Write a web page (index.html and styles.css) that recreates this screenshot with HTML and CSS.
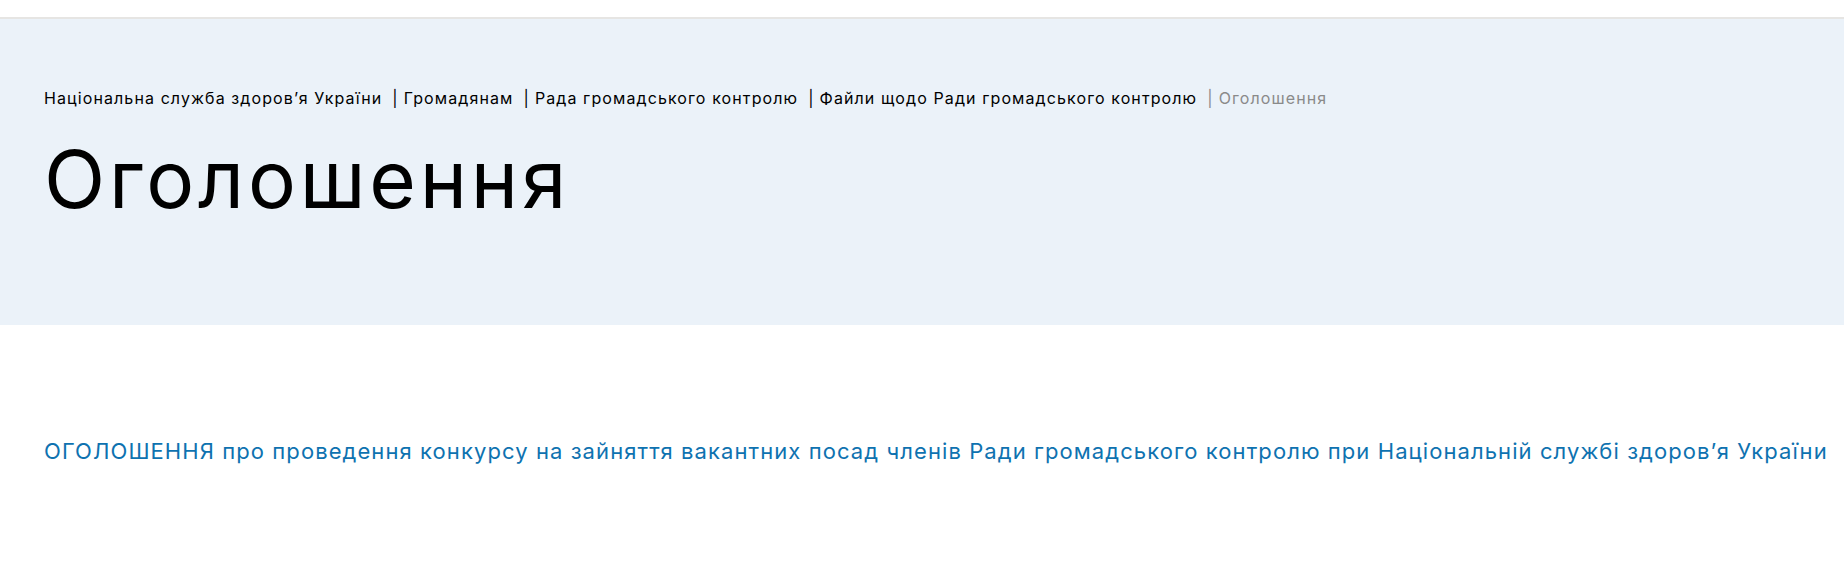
FILE: index.html
```html
<!DOCTYPE html>
<html lang="uk">
<head>
<meta charset="utf-8">
<title>Оголошення</title>
<link rel="stylesheet" href="styles.css">
</head>
<body>
<div class="topbar"></div>
<section class="hero">
  <nav class="crumbs"><a href="#">Національна служба здоров’я України</a><span class="sep">|</span><a href="#">Громадянам</a><span class="sep">|</span><a href="#">Рада громадського контролю</a><span class="sep">|</span><a href="#">Файли щодо Ради громадського контролю</a><span class="current"><span class="sep">|</span>Оголошення</span></nav>
  <h1 class="title">Оголошення</h1>
</section>
<main class="content">
  <a class="doc-link" href="#">ОГОЛОШЕННЯ про проведення конкурсу на зайняття вакантних посад членів Ради громадського контролю при Національній службі здоров’я України</a>
</main>
</body>
</html>
```
FILE: styles.css
```css
* { box-sizing: border-box; }
html, body { margin: 0; padding: 0; background: #fff; }
body { font-family: Inter, "Noto Sans", sans-serif; color: #000; }
.topbar { height: 19px; border-bottom: 2px solid #e6e5e3; }
.hero { background: #ebf2f9; height: 306px; padding: 69px 44px 0; }
.crumbs { font-size: 16px; line-height: 20px; letter-spacing: 1.1px; white-space: nowrap; }
.crumbs a { color: #000; text-decoration: none; }
.crumbs .sep { margin: 0 5px 0 10px; }
.crumbs .current { color: #8a8a8a; }
.title { margin: 26px 0 0; font-size: 80px; font-weight: 400; line-height: 90px; letter-spacing: 3.8px; }
.content { padding: 111px 44px 0; }
.doc-link { color: #0e72b0; text-decoration: none; font-size: 22px; line-height: 30px; letter-spacing: 1.08px; white-space: nowrap; }
```
